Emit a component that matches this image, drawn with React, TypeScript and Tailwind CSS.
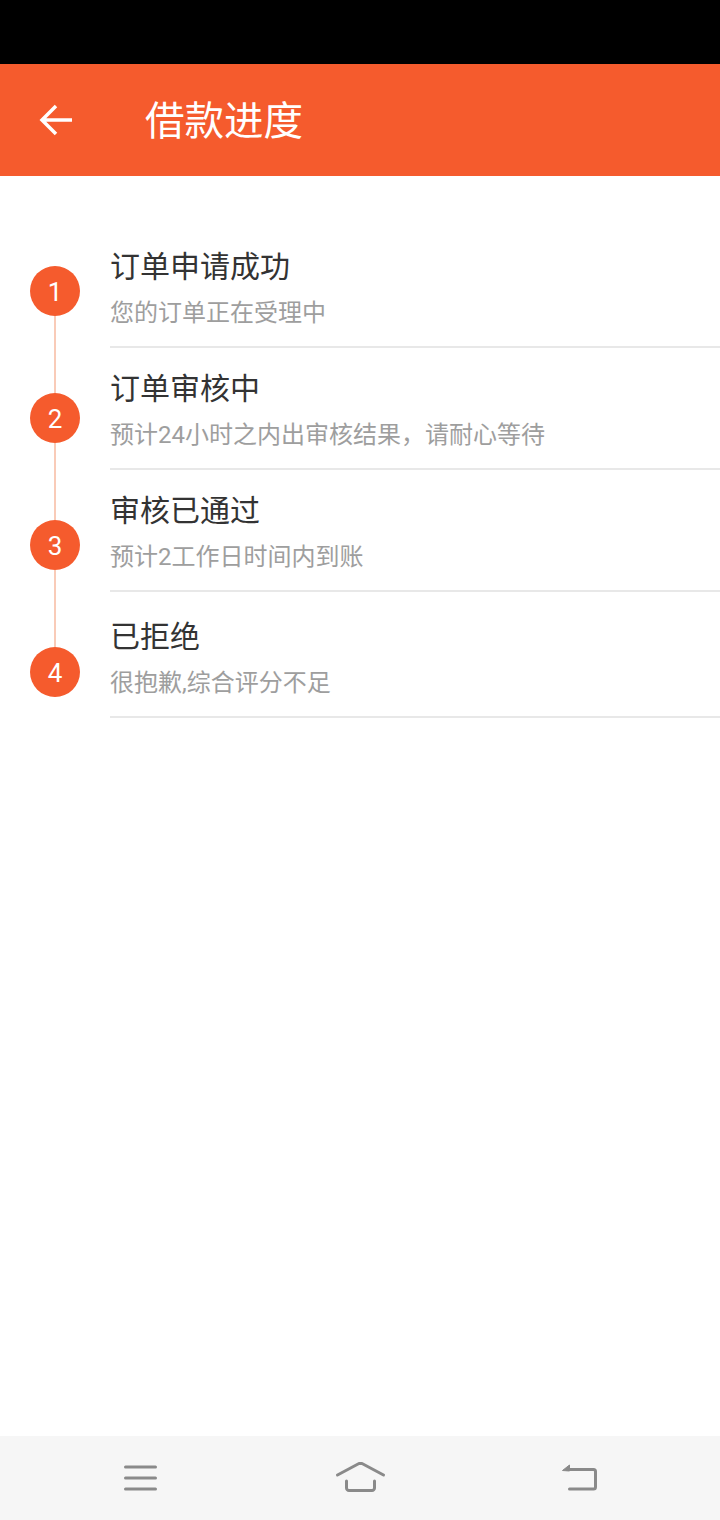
import React from "react";

const steps = [
  { n: "1", title: "订单申请成功", sub: "您的订单正在受理中" },
  { n: "2", title: "订单审核中", sub: "预计24小时之内出审核结果，请耐心等待" },
  { n: "3", title: "审核已通过", sub: "预计2工作日时间内到账" },
  { n: "4", title: "已拒绝", sub: "很抱歉,综合评分不足" },
];

const font = { fontFamily: 'Roboto, "Noto Sans CJK SC", "Noto Sans", sans-serif' };

export default function App() {
  return (
    <div className="w-[720px] min-h-[1520px] flex flex-col bg-white" style={font}>
      <div className="h-[64px] bg-black" />
      <div className="h-[112px] bg-[#f55b2d] flex items-center">
        <div className="w-[112px] flex items-center pl-[38px]">
          <svg width="36" height="34" viewBox="0 0 36 34">
            <path d="M34 17 H4 M18 3 L4 17 L18 31" fill="none" stroke="#fff" strokeWidth="3.5" />
          </svg>
        </div>
        <div className="pl-[33px] pb-[4px] text-white text-[39.5px] leading-none" style={{ fontFamily: '"Noto Sans CJK SC", sans-serif' }}>
          借款进度
        </div>
      </div>

      <div className="flex-1 flex">
        <div className="w-[110px] flex flex-col items-center pt-[90px]">
          {steps.map((s, i) => (
            <React.Fragment key={s.n}>
              <div className="w-[50px] h-[50px] rounded-full bg-[#f55b2d] flex items-center justify-center pt-[2px] text-white text-[26px] leading-none" style={{ fontFamily: "Roboto, sans-serif" }}>
                {s.n}
              </div>
              {i < steps.length - 1 && <div className="w-[2px] h-[77px] bg-[#f9cbb8]" />}
            </React.Fragment>
          ))}
        </div>
        <div className="flex-1 pt-[50px]">
          {steps.map((s, i) => (
            <div key={s.n} className={`border-b-2 border-[#e8e8e8] pb-[17px] ${i === 3 ? "pt-[25px]" : "pt-[21px]"}`}>
              <div className="h-[40px] flex items-center text-[30px] text-[#333333] leading-none whitespace-nowrap">{s.title}</div>
              <div className="mt-[10px] h-[32px] flex items-center text-[24px] text-[#9e9e9e] leading-none whitespace-nowrap">{s.sub}</div>
            </div>
          ))}
        </div>
      </div>

      <div className="h-[84px] bg-[#f6f6f6] flex justify-between px-[110px]">
        <svg width="60" height="84" viewBox="0 0 60 84">
          <path d="M15.5 31 H45.5 M15.5 42 H45.5 M15.5 53 H45.5" stroke="#8a8a8a" strokeWidth="3" strokeLinecap="round" />
        </svg>
        <svg width="60" height="84" viewBox="0 0 60 84">
          <path d="M7.5 39 L29 27.5 H32 L53.5 39" fill="none" stroke="#8a8a8a" strokeWidth="3" strokeLinecap="round" strokeLinejoin="round" />
          <path d="M16.5 45 V52 a2.5 2.5 0 0 0 2.5 2.5 H42 a2.5 2.5 0 0 0 2.5 -2.5 V45" fill="none" stroke="#8a8a8a" strokeWidth="3" strokeLinecap="round" />
        </svg>
        <svg width="60" height="84" viewBox="0 0 60 84">
          <path d="M17 33.5 H43.5 a2 2 0 0 1 2 2 V51 a2 2 0 0 1 -2 2 H19.5" fill="none" stroke="#8a8a8a" strokeWidth="3" strokeLinecap="round" />
          <path d="M12.5 34.5 L19.5 29 V35 Z" fill="#8a8a8a" stroke="#8a8a8a" strokeWidth="1" strokeLinejoin="round" />
        </svg>
      </div>
    </div>
  );
}
